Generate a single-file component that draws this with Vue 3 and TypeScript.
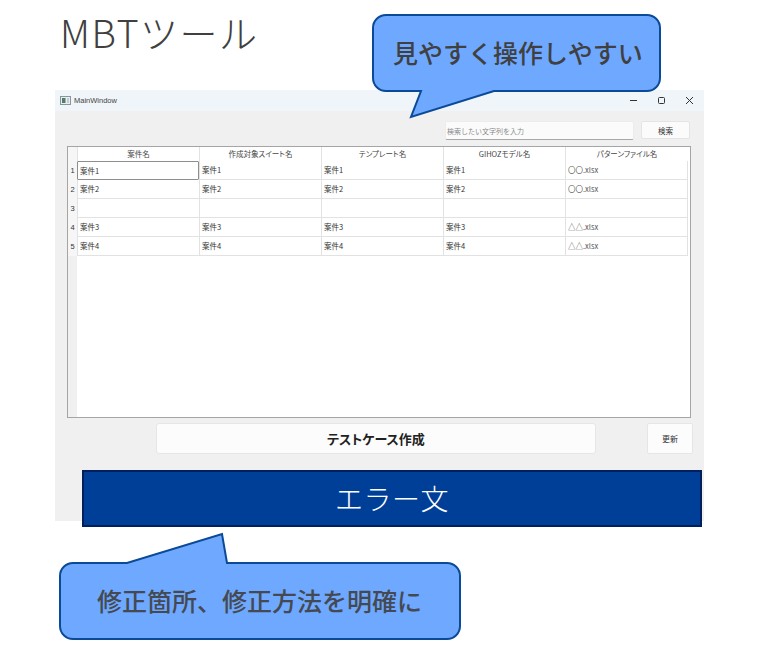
<script setup lang="ts">
const columns: string[] = ['案件名', '作成対象スイート名', 'テンプレート名', 'GIHOZモデル名', 'パターンファイル名']
const rows: { id: number; cells: string[] }[] = [
  { id: 1, cells: ['案件1', '案件1', '案件1', '案件1', '〇〇.xlsx'] },
  { id: 2, cells: ['案件2', '案件2', '案件2', '案件2', '〇〇.xlsx'] },
  { id: 3, cells: ['', '', '', '', ''] },
  { id: 4, cells: ['案件3', '案件3', '案件3', '案件3', '△△.xlsx'] },
  { id: 5, cells: ['案件4', '案件4', '案件4', '案件4', '△△.xlsx'] },
]
</script>

<template>
  <div class="page">
    <h1 class="title">MBTツール</h1>

    <section class="window">
      <header class="titlebar">
        <svg class="app-icon" width="11" height="9" viewBox="0 0 11 9">
          <rect x="0.5" y="0.5" width="10" height="8" fill="#e8eef2" stroke="#8a949c" />
          <rect x="2" y="2" width="3.5" height="5" fill="#4f7f6a" />
          <rect x="7" y="2" width="2" height="5" fill="#c4ccd2" />
        </svg>
        <span class="window-name">MainWindow</span>
        <div class="controls">
          <svg width="9" height="9" viewBox="0 0 9 9"><path d="M1 4.5H8" stroke="#333" fill="none" /></svg>
          <svg width="9" height="9" viewBox="0 0 9 9"><rect x="1.5" y="1.5" width="6" height="6" rx="1" stroke="#333" fill="none" /></svg>
          <svg width="9" height="9" viewBox="0 0 9 9"><path d="M1 1L8 8M8 1L1 8" stroke="#333" fill="none" /></svg>
        </div>
      </header>

      <div class="search-row">
        <div class="search-input">検索したい文字列を入力</div>
        <button class="search-btn">検索</button>
      </div>

      <div class="grid">
        <div class="row-strip">
          <div class="corner"></div>
          <div v-for="r in rows" :key="r.id" class="row-no">{{ r.id }}</div>
        </div>
        <div class="table">
          <div class="thead">
            <div v-for="c in columns" :key="c" class="th">{{ c }}</div>
          </div>
          <div v-for="r in rows" :key="r.id" class="tr">
            <div
              v-for="(cell, i) in r.cells"
              :key="i"
              class="td"
              :class="{ selected: r.id === 1 && i === 0, file: i === 4 }"
            >{{ cell }}</div>
          </div>
        </div>
      </div>

      <div class="actions">
        <button class="create-btn">テストケース作成</button>
        <button class="update-btn">更新</button>
      </div>
    </section>

    <div class="error-banner">エラー文</div>

    <div class="callout callout-top">
      <svg class="bubble" width="291" height="107" viewBox="0 0 291 107">
        <path
          d="M14 1H275A13 13 0 0 1 288 14V64A13 13 0 0 1 275 77H122L39 103L49 77H14A13 13 0 0 1 1 64V14A13 13 0 0 1 14 1Z"
          fill="#6ea8ff" stroke="#0a4a96" stroke-width="2"
        />
      </svg>
      <span class="callout-text top-text">見やすく操作しやすい</span>
    </div>

    <div class="callout callout-bottom">
      <svg class="bubble" width="403" height="110" viewBox="0 0 403 110">
        <path
          d="M14 31H68L163 2L168 31H388A13 13 0 0 1 401 44V94A13 13 0 0 1 388 107H14A13 13 0 0 1 1 94V44A13 13 0 0 1 14 31Z"
          fill="#6ea8ff" stroke="#0a4a96" stroke-width="2"
        />
      </svg>
      <span class="callout-text bottom-text">修正箇所、修正方法を明確に</span>
    </div>
  </div>
</template>

<style scoped>
.page {
  position: relative;
  width: 761px;
  height: 662px;
  background: #fff;
  overflow: hidden;
  font-family: "Noto Sans CJK JP", "Noto Sans", sans-serif;
  color: #333;
}
.title {
  margin: 0;
  height: 90px;
  padding: 6px 0 0 60px;
  box-sizing: border-box;
  font-size: 38px;
  letter-spacing: 1.5px;
  line-height: 52px;
  font-weight: 300;
  color: #404040;
}
.window {
  width: 649px;
  height: 431px;
  margin-left: 55px;
  background: #f0f0f0;
  box-sizing: border-box;
  display: flex;
  flex-direction: column;
}
.titlebar {
  height: 21px;
  flex: none;
  display: flex;
  align-items: center;
  padding: 0 10px 0 5px;
  background: #f0f5f9;
}
.app-icon { margin-right: 3px; }
.window-name {
  font-size: 7.5px;
  color: #444;
  font-family: "Liberation Sans", sans-serif;
}
.controls {
  margin-left: auto;
  display: flex;
  gap: 19px;
}
.search-row {
  display: flex;
  margin: 10px 0 0 390px;
  gap: 7px;
}
.search-input {
  width: 189px;
  height: 19px;
  box-sizing: border-box;
  background: #fbfbfb;
  border: 1px solid #ececec;
  border-bottom-color: #a8a8a8;
  border-radius: 2px;
  font-size: 7px;
  line-height: 18px;
  padding-left: 1px;
  color: #8a8a8a;
}
.search-btn {
  width: 49px;
  height: 18px;
  padding: 0;
  background: #fbfbfb;
  border: 1px solid #e4e4e4;
  border-radius: 2px;
  font-family: inherit;
  font-size: 7.5px;
  color: #333;
}
.grid {
  display: flex;
  flex: none;
  width: 624px;
  height: 272px;
  margin: 6px 0 0 12px;
  box-sizing: border-box;
  border: 1px solid #a5a5a5;
  background: #fff;
}
.row-strip {
  width: 9px;
  flex: none;
  background: #f0f0f0;
}
.corner { height: 14px; background: #f6f6f6; }
.row-no {
  height: 19px;
  line-height: 19px;
  font-size: 7.5px;
  text-align: center;
  background: #f6f6f6;
  font-family: "Liberation Sans", sans-serif;
}
.table {
  width: 611px;
  flex: none;
}
.thead, .tr {
  display: grid;
  grid-template-columns: repeat(4, 122px) 123px;
}
.th {
  height: 14px;
  line-height: 14px;
  box-sizing: border-box;
  border-left: 1px solid #e2e2e2;
  text-align: center;
  font-size: 7.5px;
  font-feature-settings: "palt";
  color: #444;
}
.td {
  height: 19px;
  box-sizing: border-box;
  border-left: 1px solid #e2e2e2;
  border-bottom: 1px solid #e2e2e2;
  padding-left: 2px;
  line-height: 18px;
  font-size: 7.5px;
  color: #333;
}
.td:last-child { border-right: 1px solid #e2e2e2; }
.td.file { color: #555; }
.td.selected {
  border: 1px solid #8e8e8e;
  border-radius: 1px;
  line-height: 17px;
  padding-left: 2px;
}
.actions {
  display: flex;
  margin: 5px 0 0 101px;
}
.create-btn {
  width: 440px;
  height: 31px;
  padding: 0;
  background: #fcfcfc;
  border: 1px solid #e6e6e6;
  border-radius: 3px;
  font-family: inherit;
  font-size: 13px;
  font-weight: 700;
  font-feature-settings: "palt";
  color: #222;
}
.update-btn {
  width: 46px;
  height: 31px;
  margin-left: 51px;
  padding: 0;
  background: #fcfcfc;
  border: 1px solid #e6e6e6;
  border-radius: 2px;
  font-family: inherit;
  font-size: 8px;
  color: #333;
}
.error-banner {
  position: absolute;
  left: 82px;
  top: 470px;
  width: 620px;
  height: 57px;
  box-sizing: border-box;
  background: #003f98;
  border: 2px solid #001f5c;
  color: #fff;
  font-size: 28px;
  font-weight: 300;
  letter-spacing: 0.5px;
  line-height: 53px;
  text-align: center;
}
.callout { position: absolute; }
.callout-top { left: 372px; top: 14px; width: 291px; height: 107px; }
.callout-bottom { left: 59px; top: 532px; width: 403px; height: 110px; }
.bubble { display: block; }
.callout-text {
  position: absolute;
  font-size: 25px;
  font-weight: 500;
  line-height: 36px;
  color: #404040;
  white-space: nowrap;
}
.top-text { left: 21px; top: 20px; }
.bottom-text { left: 38px; top: 50px; color: #454a52; }
</style>
